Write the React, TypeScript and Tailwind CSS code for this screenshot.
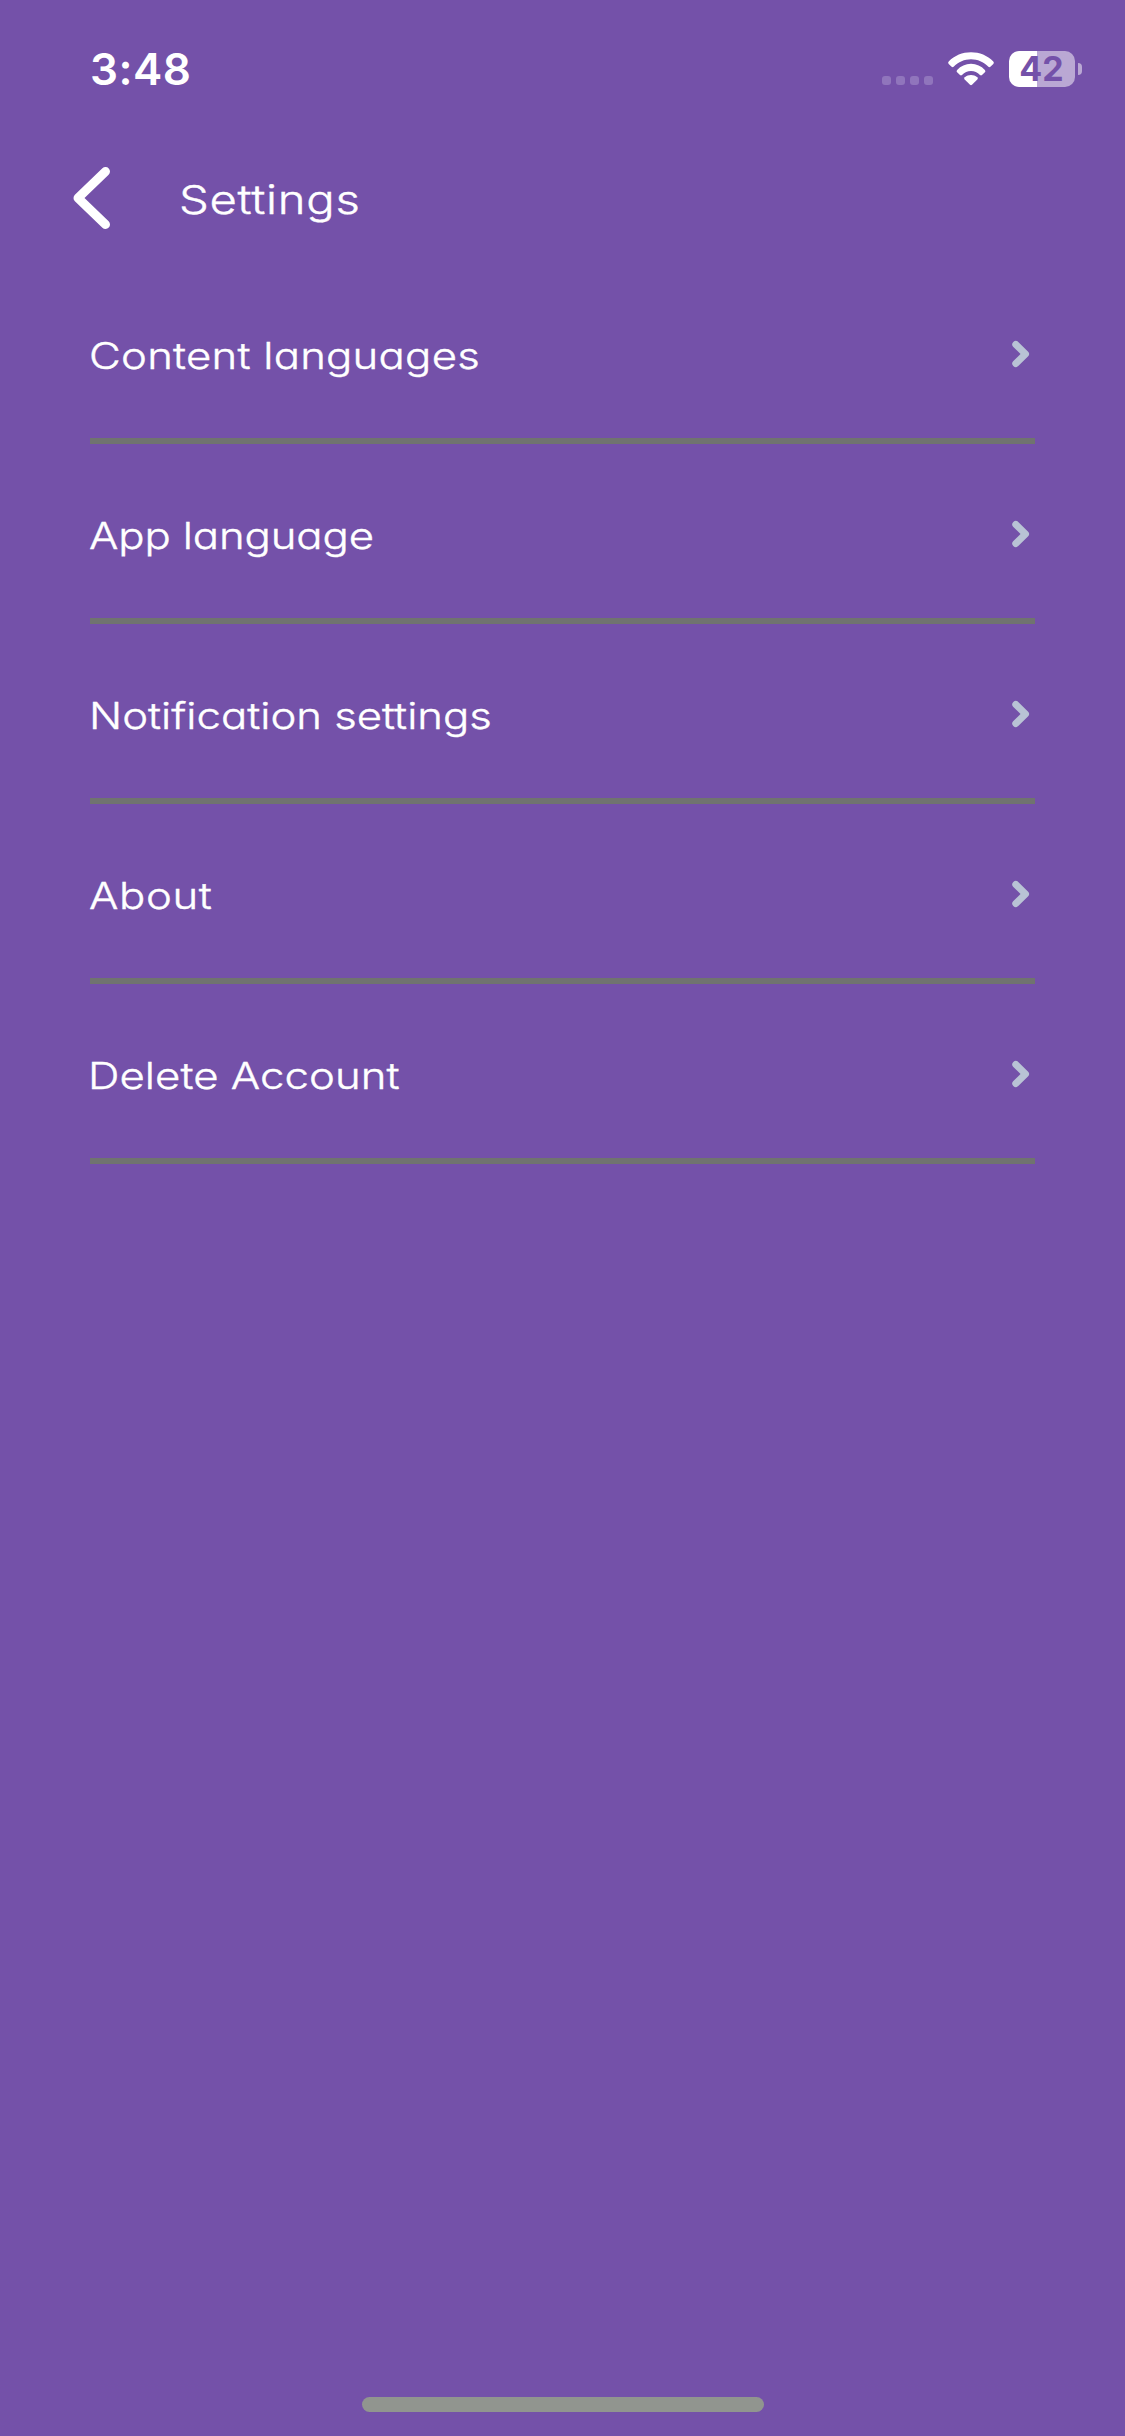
const rows = [
  { label: 'Content languages', text: 'tracking-[0.2px] -ml-[1px]' },
  { label: 'App language', text: '-tracking-[0.1px] -ml-[1px]' },
  { label: 'Notification settings', text: 'tracking-[0px] -ml-[1px]' },
  { label: 'About', text: 'tracking-[0.55px] -ml-[1px]' },
  { label: 'Delete Account', text: 'tracking-[0.05px] -ml-[2px]' },
];

function Wifi() {
  return (
    <svg width="48" height="34" viewBox="0 0 48 34" fill="white" className="ml-[14px]">
      <path d="M1.700 11.900Q0.500 10.700 1.700 9.500C7.600 3.500 15.400 0.300 24 0.300S40.400 3.500 46.300 9.500Q47.500 10.700 46.300 11.900L43.400 14.700Q42.400 15.600 41.400 14.700C36.500 9.900 30.600 7.200 24 7.200S11.500 9.900 6.600 14.700Q5.600 15.600 4.600 14.700Z" />
      <path d="M10.100 20.200Q9 19 10.100 17.900C13.800 14.100 18.500 11.800 24 11.800S34.200 14.100 37.900 17.900Q39 19 37.900 20.200L35 23Q34 23.900 33 23C30.400 20.400 27.500 18.900 24 18.900S17.600 20.400 15 23Q14 23.900 13 23Z" />
      <path d="M17.700 27.600Q16.500 26.400 17.800 25.300C19.600 23.900 21.600 23 24 23S28.400 23.900 30.200 25.300Q31.500 26.400 30.300 27.600L25 32.800Q24 33.700 23 32.800Z" />
    </svg>
  );
}

function Battery() {
  return (
    <div className="ml-[14px] flex items-center">
      <div className="flex h-9 w-[66px] items-center justify-center rounded-[10px] bg-linear-to-r from-white from-[42.5%] to-[#baa8d4] to-[42.5%] text-[34px] leading-9 font-bold text-[#7451a9]">
        <span className="-ml-[1px]">42</span>
      </div>
      <div className="ml-[3px] h-3 w-1 rounded-r-full bg-[#baa8d4]" />
    </div>
  );
}

export default function App() {
  return (
    <div className="flex h-[2436px] w-[1125px] flex-col bg-[#7451a9] font-['Inter',sans-serif] text-white">
      <header className="flex h-[138px] items-start justify-between pt-[51px] pr-[43px] pl-[90px]">
        <div className="text-[44px] leading-9 font-semibold tracking-[0.5px]">3:48</div>
        <div className="flex h-9 items-center">
          <div className="flex gap-[5px] pt-[22px]">
            {[0, 1, 2, 3].map((i) => (
              <div key={i} className="size-[9px] rounded-[3px] bg-[#9075bc]" />
            ))}
          </div>
          <Wifi />
          <Battery />
        </div>
      </header>
      <nav className="flex h-[126px] items-center pb-[6px] pl-[72px]">
        <svg width="40" height="64" viewBox="0 0 40 64" fill="none" stroke="white" strokeWidth="9" strokeLinecap="round">
          <path d="M33.500 5.500L6 32L33.500 58.500" strokeLinejoin="round" />
        </svg>
        <h1 className="mt-[3px] ml-[67px] origin-left scale-x-118 text-[40px] leading-[48px] font-light tracking-[0.6px] [-webkit-text-stroke:0.4px_white] [font-feature-settings:'cv11']">Settings</h1>
      </nav>
      <main className="px-[90px]">
        {rows.map((row) => (
          <button
            key={row.label}
            className="flex h-[180px] w-full items-center justify-between border-b-[6px] border-[#70736f] pt-[6px] pr-[4px] text-left"
          >
            <span className={`origin-left scale-x-118 pt-[3px] text-[37px] leading-[44px] font-light whitespace-nowrap [-webkit-text-stroke:0.4px_white] [font-feature-settings:'cv11'] ${row.text}`}>
              {row.label}
            </span>
            <svg width="20" height="28" viewBox="0 0 20 28" fill="none" stroke="#b9c3d5" strokeWidth="7" strokeLinecap="round" strokeLinejoin="round">
              <path d="M4.800 4.500L14.500 14L4.800 23.500" />
            </svg>
          </button>
        ))}
      </main>
      <div className="mx-auto mt-auto mb-6 h-[15px] w-[402px] rounded-full bg-[#91958f]" />
    </div>
  );
}
